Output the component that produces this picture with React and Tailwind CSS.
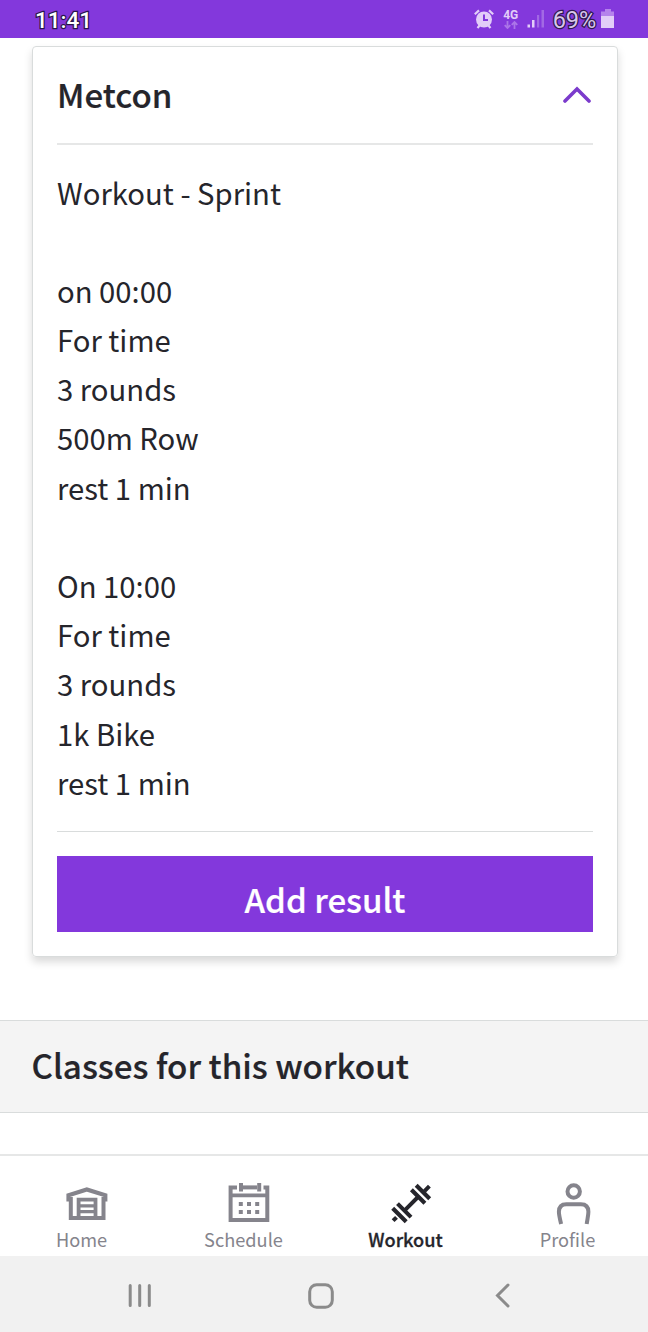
import React from "react";

const workoutLines = [
  "Workout - Sprint",
  "",
  "on 00:00",
  "For time",
  "3 rounds",
  "500m Row",
  "rest 1 min",
  "",
  "On 10:00",
  "For time",
  "3 rounds",
  "1k Bike",
  "rest 1 min",
];

const HomeIcon = () => (
  <svg width="42" height="40" viewBox="0 0 42 40" fill="none" stroke="currentColor">
    <path d="M2.5 18.5V12.2L20.8 6.4L39.3 12.2V18.5" strokeWidth="4.2" />
    <path d="M4.8 14V35H37.5V14" strokeWidth="4" />
    <path d="M12.6 35V16.6H29.5V35" strokeWidth="3.8" />
    <path d="M12.5 22.9H29.5M12.5 28.6H29.5" strokeWidth="3.4" />
  </svg>
);

const ScheduleIcon = () => (
  <svg width="42" height="40" viewBox="0 0 42 40" fill="none" stroke="currentColor">
    <path d="M9 4.4H2.6V37H39.3V4.4H35.5" strokeWidth="4" />
    <path d="M14 4.4H29" strokeWidth="4" />
    <path d="M13 0V8.5M31.2 0V8.5" strokeWidth="4" />
    <path d="M3 12.4H39" strokeWidth="3.6" />
    <path d="M10.8 21H31.6M10.8 29H31.6" strokeWidth="4" strokeDasharray="4 4.2" />
  </svg>
);

const WorkoutIcon = () => (
  <svg width="42" height="42" viewBox="0 0 42 42" fill="none" stroke="currentColor">
    <path d="M2.7 25.2L16.2 38.7M7.5 20.6L21 34.1" strokeWidth="4.1" />
    <path d="M21.4 6.8L34.9 20.3M26.2 2.2L39.7 15.7" strokeWidth="4.1" />
    <path d="M14.2 27.8L28 14M34.5 8.1L39.4 3.2M3.1 37.7L6.5 34.3" strokeWidth="4" />
  </svg>
);

const ProfileIcon = () => (
  <svg width="42" height="42" viewBox="0 0 42 42" fill="none" stroke="currentColor" strokeWidth="4">
    <circle cx="21.7" cy="8.5" r="6.2" />
    <path d="M9.1 41C7.9 36 6.9 32 6.9 28.8Q6.9 21.2 14.4 21.2H28.9Q36.4 21.2 36.4 28.8C36.4 32 35.4 36 34.7 41" />
  </svg>
);

const tabs = [
  { label: "Home", icon: HomeIcon },
  { label: "Schedule", icon: ScheduleIcon },
  { label: "Workout", icon: WorkoutIcon, active: true },
  { label: "Profile", icon: ProfileIcon },
];

const StatusBar = () => (
  <div className="flex h-[38px] shrink-0 items-center justify-between bg-[#8338dc] pr-[33px] pl-[35px] font-[Roboto,sans-serif]">
    <span className="pt-[2px] text-[22.5px] leading-[36px] font-medium text-white [paint-order:stroke_fill] [-webkit-text-stroke:2.5px_#29144b]">
      11:41
    </span>
    <div className="flex items-center text-[#e2cdf8]">
      <svg width="20" height="20" viewBox="0 0 20 20" fill="none" stroke="currentColor">
        <circle cx="10" cy="10.5" r="8" fill="currentColor" stroke="none" />
        <path d="M.8 5.2L5 1.4M19.2 5.2L15 1.4M3.5 19L6 16M16.5 19L14 16" strokeWidth="2.2" />
        <path d="M10 5.5V11H14" stroke="#8338dc" strokeWidth="2" />
      </svg>
      <div className="ml-[9px] flex w-[16px] flex-col items-center">
        <span className="text-[12px] leading-[12px] font-bold">4G</span>
        <svg width="14" height="8" viewBox="0 0 14 8" fill="none" stroke="#ab75e8" strokeWidth="1.8">
          <path d="M3.5 0V7M.7 4.2L3.5 7L6.3 4.2M10.5 8V1M7.7 3.8L10.5 1L13.3 3.8" />
        </svg>
      </div>
      <svg className="ml-[8px]" width="18" height="18" viewBox="0 0 18 18" fill="currentColor">
        <path d="M.5 14.5H3V17.5H.5zM5 10H7.5V17.5H5z" />
        <path d="M10 5H12.2V17.5H10zM14.5 0H17V17.5H14.5z" fill="#a269e4" />
      </svg>
      <span className="ml-[8px] pt-[2px] text-[23.5px] leading-[36px] tracking-[-0.1px] text-[#d8c6ea] [paint-order:stroke_fill] [-webkit-text-stroke:2.5px_#30194f]">
        69%
      </span>
      <svg className="ml-[5px]" width="14" height="20" viewBox="0 0 14 20" fill="currentColor">
        <path d="M4 0H10V2.5H13V7H0V2.5H4z" fill="#b583ec" />
        <path d="M0 7H13V19H0z" />
      </svg>
    </div>
  </div>
);

const App = () => {
  return (
    <div className="flex h-[1332px] w-[648px] flex-col overflow-hidden bg-white font-['Noto_Sans_CJK_SC',sans-serif] text-[#25252b]">
      <StatusBar />

      <div className="mx-8 mt-2 h-[911px] w-[586px] shrink-0 rounded-[4px] border border-[#d9dcdc] px-6 shadow-[0_5px_8px_rgba(0,0,0,0.15)]">
        <div className="flex h-[98px] items-center justify-between border-b-2 border-[#e6e7e7]">
          <h2 className="text-[33px] font-medium [-webkit-text-stroke:0.2px]">Metcon</h2>
          <svg className="mr-[2px]" width="28" height="18" viewBox="0 0 28 18" fill="none" stroke="#7b3bcc" strokeWidth="3.6" strokeLinecap="round">
            <path d="M2 15L14 3L26 15" />
          </svg>
        </div>

        <div className="h-[687px] border-b border-[#d9dcdc] pt-[22.5px]">
          {workoutLines.map((line, i) => (
            <p key={i} className="h-[49.2px] text-[29.25px] leading-[49.2px]">
              {line}
            </p>
          ))}
        </div>

        <button className="mt-6 block h-[76px] w-full bg-[#8338dc] pt-[12px] pb-[2px] text-[33.1px] leading-[62px] font-medium text-white [-webkit-text-stroke:0.2px]">
          Add result
        </button>
      </div>

      <div className="mt-[63px] flex h-[93px] shrink-0 items-center border-y border-[#d9dcdc] bg-[#f4f4f4] pb-[3px] pl-[31.5px]">
        <h2 className="text-[33.2px] font-medium [-webkit-text-stroke:0.2px]">Classes for this workout</h2>
      </div>

      <nav className="mt-[41px] flex h-[102px] shrink-0 border-t-2 border-[#e6e7e7]">
        {tabs.map(({ label, icon: Icon, active }) => (
          <div
            key={label}
            className={`flex w-1/4 flex-col items-center pt-[27px] ${active ? "font-medium text-[#25252b] [-webkit-text-stroke:0.3px]" : "text-[#85848c]"}`}
          >
            <div className="ml-[11px] h-[41px]">
              <Icon />
            </div>
            <span className="pl-[1px] text-[18.2px] leading-[30px]">{label}</span>
          </div>
        ))}
      </nav>

      <div className="flex h-[76px] shrink-0 items-center bg-[#f1f1f1] pt-[3px] pl-[128px] text-[#8b8b8b]">
        <svg width="24" height="26" viewBox="0 0 24 26" fill="none" stroke="currentColor" strokeWidth="3" strokeLinecap="round">
          <path d="M2.2 2.5V22.5M11.7 2.5V22.5M21.3 2.5V22.5" />
        </svg>
        <svg className="ml-[156px]" width="26" height="26" viewBox="0 0 26 26" fill="none" stroke="currentColor" strokeWidth="3">
          <rect x="1.7" y="1.7" width="22.6" height="22.6" rx="7" />
        </svg>
        <svg className="ml-[161px]" width="15" height="26" viewBox="0 0 15 26" fill="none" stroke="currentColor" strokeWidth="3" strokeLinecap="round">
          <path d="M13 2L2.5 12.5L13 23" />
        </svg>
      </div>
    </div>
  );
};

export default App;
